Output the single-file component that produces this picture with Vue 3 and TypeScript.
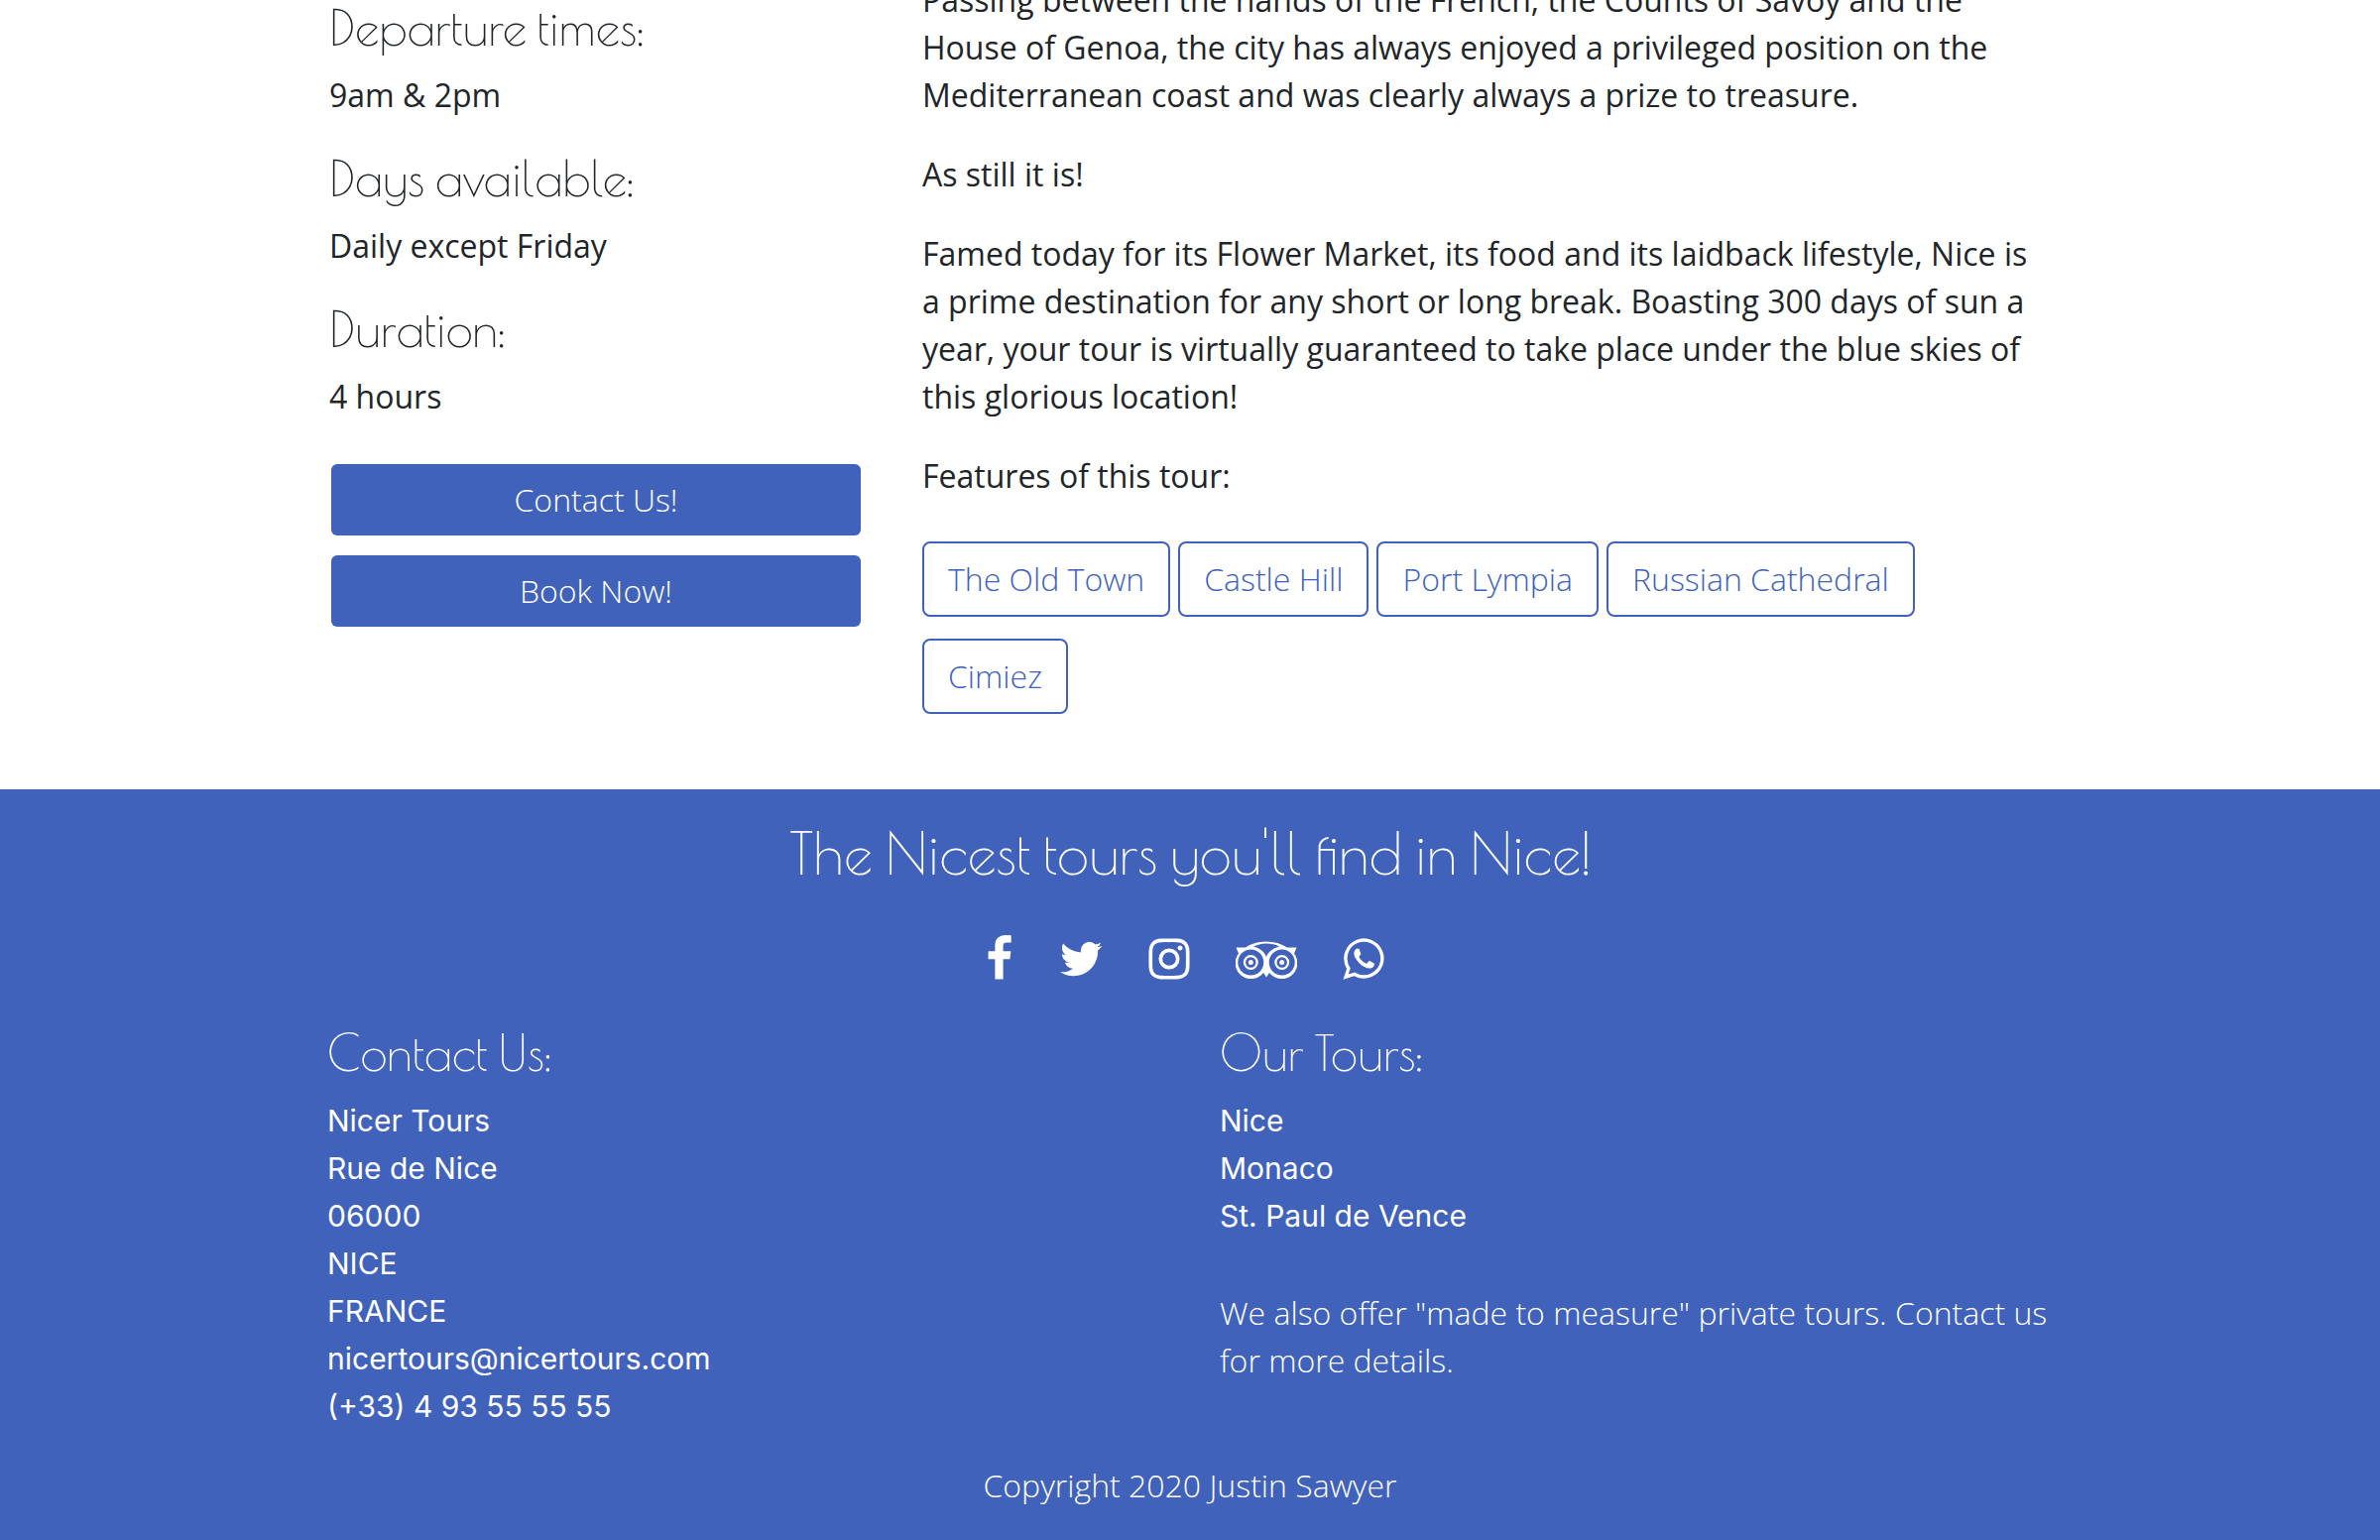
<script setup lang="ts">
interface Fact {
  label: string
  value: string
}

interface SocialLink {
  name: string
  viewBox: string
  width: number
  path: string
}

const facts: Fact[] = [
  { label: 'Departure times:', value: '9am & 2pm' },
  { label: 'Days available:', value: 'Daily except Friday' },
  { label: 'Duration:', value: '4 hours' },
]

const features: string[] = ['The Old Town', 'Castle Hill', 'Port Lympia', 'Russian Cathedral', 'Cimiez']

const tours: string[] = ['Nice', 'Monaco', 'St. Paul de Vence']

const socials: SocialLink[] = [
  {
    name: 'Facebook',
    viewBox: '384 0 1045 1792',
    width: 28,
    path: 'M1343 12v264h-157q-86 0-116 36t-30 108v189h293l-39 296h-254v759h-306v-759h-255v-296h255v-218q0-186 104-288.500t277-102.500q147 0 228 12z',
  },
  {
    name: 'Twitter',
    viewBox: '64 0 1643 1792',
    width: 44,
    path: 'M1684 408q-67 98-162 167 1 14 1 42 0 130-38 259.500t-115.500 248.500-184.500 210.500-258 146-323 54.500q-271 0-496-145 35 4 78 4 225 0 401-138-105-2-188-64.500t-114-159.500q33 5 61 5 43 0 85-11-112-23-185.500-111.500t-73.500-205.500v-4q68 38 146 41-66-44-105-115t-39-154q0-88 44-163 121 149 294.500 238.500t371.500 99.500q-8-38-8-74 0-134 94.500-228.500t228.500-94.500q140 0 236 102 109-21 205-78-37 115-142 178 93-10 186-50z',
  },
  {
    name: 'Instagram',
    viewBox: '112 0 1568 1792',
    width: 42,
    path: 'M1152 896q0-106-75-181t-181-75-181 75-75 181 75 181 181 75 181-75 75-181zm138 0q0 164-115 279t-279 115-279-115-115-279 115-279 279-115 279 115 115 279zm108-410q0 38-27 65t-65 27-65-27-27-65 27-65 65-27 65 27 27 65zm-502-220q-7 0-76.500-.5t-105.500 0-96.500 3-103 10-71.500 18.500q-50 20-88 58t-58 88q-11 29-18.500 71.500t-10 103-3 96.500 0 105.500 .5 76.500-.5 76.500 0 105.500 3 96.500 10 103 18.500 71.500q20 50 58 88t88 58q29 11 71.500 18.500t103 10 96.500 3 105.500 0 76.500-.5 76.500 .5 105.500 0 96.500-3 103-10 71.500-18.500q50-20 88-58t58-88q11-29 18.500-71.500t10-103 3-96.500 0-105.500-.5-76.500 .5-76.500 0-105.500-3-96.500-10-103-18.500-71.500q-20-50-58-88t-88-58q-29-11-71.500-18.500t-103-10-96.500-3-105.500 0-76.500 .5zm768 630q0 229-5 317-10 208-124 322t-322 124q-88 5-317 5t-317-5q-208-10-322-124t-124-322q-5-88-5-317t5-317q10-208 124-322t322-124q88-5 317-5t317 5q208 10 322 124t124 322q5 88 5 317z',
  },
  {
    name: 'Tripadvisor',
    viewBox: '0 0 62 48',
    width: 62,
    path: 'M0.500 12.500H10C16 8.500 23 6.500 31 6.500S46 8.500 52 12.500H61.500L59 18.500A15.500 15.500 0 1 1 34 38L31 42.500L28 38A15.500 15.500 0 1 1 3 18.500ZM31 22.500C31.500 19 36 13.500 44 11.500C40 9.500 36 8.600 31 8.600S22 9.500 18 11.500C26 13.500 30.500 19 31 22.500ZM15.300 14.500A13 13 0 1 0 15.300 40.500A13 13 0 1 0 15.300 14.500ZM46.700 14.500A13 13 0 1 0 46.700 40.500A13 13 0 1 0 46.700 14.500ZM15.300 20A7.500 7.500 0 1 1 15.300 35A7.500 7.500 0 1 1 15.300 20ZM15.300 22.300A5.200 5.200 0 1 0 15.300 32.700A5.200 5.200 0 1 0 15.300 22.300ZM46.700 20A7.500 7.500 0 1 1 46.700 35A7.500 7.500 0 1 1 46.700 20ZM46.700 22.300A5.200 5.200 0 1 0 46.700 32.700A5.200 5.200 0 1 0 46.700 22.300ZM15.300 25A2.500 2.500 0 1 1 15.300 30A2.500 2.500 0 1 1 15.300 25ZM46.700 25A2.500 2.500 0 1 1 46.700 30A2.500 2.500 0 1 1 46.700 25Z',
  },
  {
    name: 'WhatsApp',
    viewBox: '112 0 1568 1792',
    width: 42,
    path: 'M1113 974q13 0 97.500 44t89.500 53q2 5 2 15 0 33-17 76-16 39-71 65.500t-102 26.500q-57 0-190-62-98-45-170-118t-148-185q-72-107-71-194v-8q3-91 74-158 24-22 52-22 6 0 18 1.500t19 1.500q19 0 26.500 6.500t15.500 27.500q8 20 33 88t25 75q0 21-34.500 57.500t-34.500 46.500q0 7 5 15 34 73 102 137 56 53 151 101 12 7 22 7 15 0 54-48.500t52-48.500zm-203 530q127 0 243.500-50t200.500-134 134-200.500 50-243.500-50-243.500-134-200.500-200.500-134-243.500-50-243.500 50-200.500 134-134 200.500-50 243.500q0 203 120 368l-79 233 242-77q158 104 345 104zm0-1382q153 0 292.500 60t240.500 161 161 240.500 60 292.500-60 292.500-161 240.500-240.500 161-292.500 60q-195 0-365-94l-417 134 136-405q-108-178-108-389 0-153 60-292.500t161-240.500 240.500-161 292.500-60z',
  },
]
</script>

<template>
  <div class="page">
    <main class="container tour">
      <aside class="details">
        <section v-for="fact in facts" :key="fact.label" class="fact">
          <h3>{{ fact.label }}</h3>
          <p>{{ fact.value }}</p>
        </section>
        <nav class="actions">
          <a class="action" href="#contact">Contact Us!</a>
          <a class="action" href="#book">Book Now!</a>
        </nav>
      </aside>
      <article class="story">
        <p>
          Passing between the hands of the French, the Counts of Savoy and the House of Genoa, the city has always
          enjoyed a privileged position on the Mediterranean coast and was clearly always a prize to treasure.
        </p>
        <p>As still it is!</p>
        <p>
          Famed today for its Flower Market, its food and its laidback lifestyle, Nice is a prime destination for any
          short or long break. Boasting 300 days of sun a year, your tour is virtually guaranteed to take place under
          the blue skies of this glorious location!
        </p>
        <p>Features of this tour:</p>
        <div class="features">
          <button v-for="feature in features" :key="feature" type="button" class="feature">{{ feature }}</button>
        </div>
      </article>
    </main>

    <footer class="footer">
      <h2>The Nicest tours you'll find in Nice!</h2>
      <nav class="socials">
        <a v-for="social in socials" :key="social.name" href="#" :aria-label="social.name">
          <svg :viewBox="social.viewBox" :width="social.width" height="48" aria-hidden="true">
            <path :d="social.path" fill="currentColor" fill-rule="evenodd" />
          </svg>
        </a>
      </nav>
      <div class="container columns">
        <section id="contact" class="column">
          <h3>Contact Us:</h3>
          <address>
            Nicer Tours<br />
            Rue de Nice<br />
            06000<br />
            NICE<br />
            FRANCE<br />
            <a href="mailto:nicertours@nicertours.com">nicertours@nicertours.com</a><br />
            <a href="tel:+33493555555">(+33) 4 93 55 55 55</a>
          </address>
        </section>
        <section class="column">
          <h3>Our Tours:</h3>
          <ul>
            <li v-for="tour in tours" :key="tour"><a href="#">{{ tour }}</a></li>
          </ul>
          <p class="offer">We also offer "made to measure" private tours. Contact us for more details.</p>
        </section>
      </div>
      <p class="copyright">Copyright 2020 Justin Sawyer</p>
    </footer>
  </div>
</template>

<style>
body {
  margin: 0;
  background: #fff;
}
</style>

<style scoped>
.page {
  display: flex;
  flex-direction: column;
  min-height: 100vh;
  overflow: hidden;
  color: #212529;
  font: 400 32px/48px 'Open Sans', 'Noto Sans', sans-serif;
}

.page *,
.page {
  box-sizing: border-box;
}

h2,
h3,
p,
ul {
  margin: 0;
  padding: 0;
}

h2,
h3 {
  font-family: 'Poiret One', Lato, sans-serif;
  font-weight: 400;
}

h3 {
  margin-bottom: 16px;
  font-size: 49px;
  line-height: 56px;
}

a {
  color: inherit;
  text-decoration: none;
}

.container {
  display: grid;
  width: 75%;
  margin: 0 auto;
}

/* The view is scrolled part-way into the first paragraph. */
.tour {
  grid-template-columns: 1fr 2fr;
  margin-top: -24px;
  padding-bottom: 76px;
}

.details {
  padding: 24px 30px 0 32px;
}

.fact {
  margin-bottom: 32px;
}

.actions {
  display: flex;
  flex-direction: column;
  gap: 20px;
  margin: 44px 2px 0;
}

.action {
  padding: 12px;
  border-radius: 6px;
  background: #4062bb;
  color: #fff;
  font-weight: 300;
  text-align: center;
}

.story {
  padding: 0 30px;
}

.story p {
  margin-bottom: 32px;
}

.features {
  display: flex;
  flex-wrap: wrap;
  gap: 22px 8px;
  padding-top: 10px;
}

.feature {
  padding: 12px 24px;
  border: 2px solid #4062bb;
  border-radius: 8px;
  background: transparent;
  color: #4062bb;
  font: inherit;
  font-weight: 300;
}

.footer {
  flex: 1;
  padding: 26px 0 32px;
  background: #4062bb;
  color: #fff;
  font-weight: 300;
}

h2 {
  font-size: 58px;
  line-height: 76px;
  text-align: center;
}

.socials {
  display: flex;
  justify-content: center;
  gap: 46px;
  margin: 45px 10px 43px 0;
}

.socials svg {
  display: block;
}

.columns {
  grid-template-columns: 1fr 1fr;
}

.column {
  padding: 0 30px;
}

address,
ul {
  font-family: Inter, 'Liberation Sans', sans-serif;
  font-style: normal;
  font-weight: 400;
  font-size: 30px;
  list-style: none;
}

.offer {
  margin-top: 50px;
}

.copyright {
  margin-top: 32px;
  text-align: center;
}
</style>
